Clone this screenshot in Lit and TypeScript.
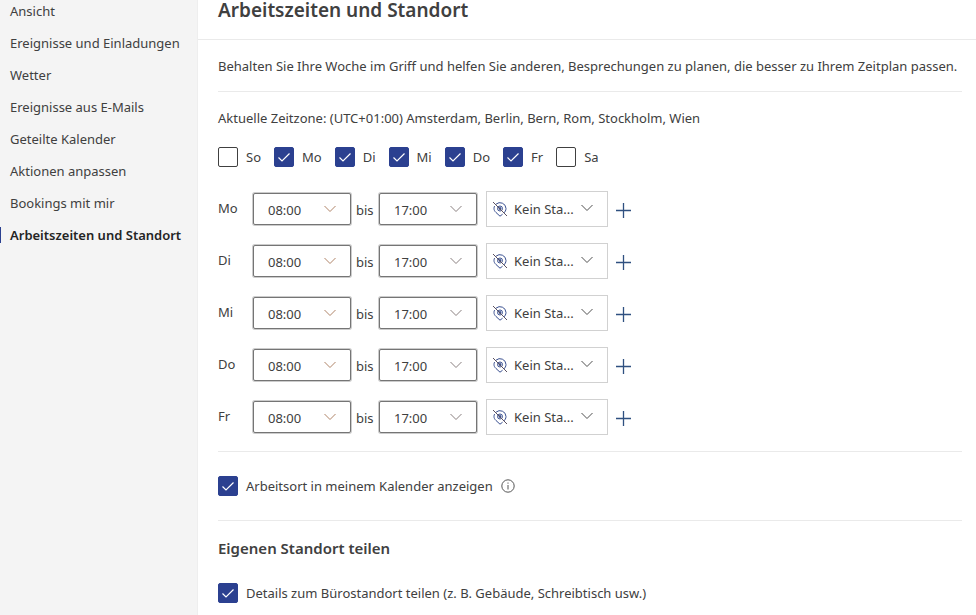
import { LitElement, css, html, svg } from "lit";
import { customElement, state } from "lit/decorators.js";

const NAV = [
  "Ansicht",
  "Ereignisse und Einladungen",
  "Wetter",
  "Ereignisse aus E-Mails",
  "Geteilte Kalender",
  "Aktionen anpassen",
  "Bookings mit mir",
  "Arbeitszeiten und Standort",
];
const DAYS = ["So", "Mo", "Di", "Mi", "Do", "Fr", "Sa"];

const chevron = html`<svg class="chevron" viewBox="0 0 14 8" aria-hidden="true">
  ${svg`<path d="M1.5 1l5.5 5.5L12.5 1" fill="none" stroke="currentColor"/>`}
</svg>`;

@customElement("app-root")
export class AppRoot extends LitElement {
  @state() private workDays = ["Mo", "Di", "Mi", "Do", "Fr"];

  static styles = css`
    :host {
      display: flex;
      min-height: 100vh;
      box-sizing: border-box;
      background: #fff;
      color: #404040;
      font: 13px/20px "Noto Sans", "Open Sans", sans-serif;
    }
    * { box-sizing: border-box; }
    nav {
      flex: 0 0 198px;
      background: #f4f4f4;
      border-right: 1px solid #eee;
    }
    ul {
      display: flex;
      flex-direction: column;
      gap: 12px;
      margin: 0;
      padding: 1px 0 0;
      list-style: none;
    }
    .link {
      display: flex;
      padding-left: 10px;
      color: inherit;
      text-decoration: none;
      white-space: nowrap;
    }
    .link.active {
      padding-left: 0;
      color: #242424;
      font-weight: 600;
    }
    .link.active::before {
      content: "";
      width: 1px;
      height: 16px;
      margin: 2px 9px 2px 0;
      background: #2b4090;
    }
    main { flex: 1; min-width: 0; }
    header {
      height: 40px;
      padding-left: 20px;
      border-bottom: 1px solid #eaeaea;
    }
    h1 {
      margin: 0;
      font-size: 19px;
      line-height: 20px;
      font-weight: 600;
    }
    .body { padding: 0 14px 0 20px; }
    p { margin: 0; white-space: nowrap; }
    .intro { padding: 16px 0 15px; border-bottom: 1px solid #eaeaea; }
    .zone { padding: 16px 0 19px; }
    .days { display: flex; gap: 13px; }
    .check {
      display: flex;
      align-items: center;
      gap: 8px;
    }
    .box {
      appearance: none;
      display: grid;
      place-items: center;
      flex: none;
      width: 20px;
      height: 20px;
      margin: 0;
      border: 1px solid #404040;
      border-radius: 2px;
      background: #fff;
    }
    .box:checked { background: #2b4090; border-color: #2b4090; }
    .tick { display: grid; }
    .tick > * { grid-area: 1 / 1; }
    .mark {
      width: 20px;
      height: 20px;
      color: #fff;
      pointer-events: none;
    }
    .box:not(:checked) + .mark { visibility: hidden; }
    .rows {
      display: grid;
      gap: 16px;
      padding: 24px 0 16px;
      border-bottom: 1px solid #eaeaea;
    }
    .row { display: flex; align-items: center; }
    .day { width: 35px; padding-bottom: 2px; }
    .until { width: 28px; padding: 2px 0 0 5px; }
    .pick { display: grid; align-items: center; }
    .pick > * { grid-area: 1 / 1; }
    select {
      appearance: none;
      margin: 0;
      color: inherit;
      font: inherit;
      background: #fff;
    }
    .time select {
      width: 98px;
      height: 32px;
      padding: 2px 0 0 14px;
      border: 1px solid #757575;
      border-radius: 2px;
      box-shadow: 0 0 0 1px #ccc;
    }
    .place { margin-left: 9px; }
    .place select {
      width: 122px;
      height: 36px;
      padding: 0 0 0 27px;
      border: 1px solid #d1d1d1;
    }
    .chevron {
      width: 14px;
      height: 8px;
      justify-self: end;
      margin-right: 14px;
      color: #8a8080;
      pointer-events: none;
    }
    .start .chevron { color: #b08468; }
    .place .chevron { margin: 0 14px 2px 0; color: #505050; }
    .pin {
      width: 16px;
      height: 16px;
      margin-left: 6px;
      color: #3a5090;
      pointer-events: none;
    }
    .add {
      display: grid;
      margin: 2px 0 0 7px;
      padding: 0;
      border: 0;
      background: none;
      color: #2f5080;
    }
    .add svg { width: 17px; height: 17px; }
    .share {
      display: flex;
      align-items: center;
      gap: 8px;
      padding: 24px 0;
      border-bottom: 1px solid #eaeaea;
    }
    .info { width: 14px; height: 14px; color: #555; }
    h2 {
      margin: 0;
      padding: 17px 0 25px;
      font-size: 15px;
      line-height: 20px;
      font-weight: 600;
    }
  `;

  private toggle(day: string) {
    this.workDays = this.workDays.includes(day)
      ? this.workDays.filter((d) => d !== day)
      : DAYS.filter((d) => d === day || this.workDays.includes(d));
  }

  private check(label: string, checked: boolean, change?: () => void) {
    return html`<label class="check">
      <span class="tick">
        <input class="box" type="checkbox" .checked=${checked} @change=${change} />
        <svg class="mark" viewBox="0 0 20 20" aria-hidden="true">
          <path d="M4.5 10.5l3.5 3.5L15.5 6.5" fill="none" stroke="currentColor" stroke-width="1.2" />
        </svg>
      </span>
      <span>${label}</span>
    </label>`;
  }

  private time(value: string, label: string, kind: "start" | "end") {
    return html`<span class=${`pick time ${kind}`}>
      <select aria-label=${label}><option>${value}</option></select>
      ${chevron}
    </span>`;
  }

  private row(day: string) {
    return html`<div class="row">
      <span class="day">${day}</span>
      ${this.time("08:00", `${day} Beginn`, "start")}
      <span class="until">bis</span>
      ${this.time("17:00", `${day} Ende`, "end")}
      <span class="pick place">
        <select aria-label=${`${day} Standort`}><option>Kein Sta...</option></select>
        <svg class="pin" viewBox="0 0 16 16" fill="none" stroke="currentColor" aria-hidden="true">
          <path d="M4 3.2A6 6 0 0 1 14 7.5c0 2-1 3.300-2.200 4.500M10.600 13.200L8 15.200 4 11.500C2.500 10 2 9 2 7.500c0-1 .2-1.700.6-2.400" />
          <circle cx="8" cy="7.500" r="2.500" />
          <circle cx="8" cy="7.500" r="1" fill="currentColor" />
          <path d="M1 1l14 14" stroke="#5a5060" />
        </svg>
        ${chevron}
      </span>
      <button class="add" type="button" aria-label=${`${day} hinzufügen`}>
        <svg viewBox="0 0 17 17" aria-hidden="true">
          <path d="M8.500 1v15M1 8.500h15" stroke="currentColor" stroke-width="1.3" />
        </svg>
      </button>
    </div>`;
  }

  render() {
    return html`
      <nav aria-label="Kalender">
        <ul>
          ${NAV.map((item, i) => {
            const active = i === NAV.length - 1;
            return html`<li><a href="#" class=${active ? "link active" : "link"}>${item}</a></li>`;
          })}
        </ul>
      </nav>
      <main>
        <header><h1>Arbeitszeiten und Standort</h1></header>
        <div class="body">
          <p class="intro">
            Behalten Sie Ihre Woche im Griff und helfen Sie anderen, Besprechungen zu planen, die besser zu Ihrem Zeitplan passen.
          </p>
          <p class="zone">Aktuelle Zeitzone: (UTC+01:00) Amsterdam, Berlin, Bern, Rom, Stockholm, Wien</p>
          <div class="days">
            ${DAYS.map((d) => this.check(d, this.workDays.includes(d), () => this.toggle(d)))}
          </div>
          <div class="rows">${this.workDays.map((d) => this.row(d))}</div>
          <div class="share">
            ${this.check("Arbeitsort in meinem Kalender anzeigen", true)}
            <svg class="info" viewBox="0 0 14 14" aria-hidden="true">
              <circle cx="7" cy="7" r="6.200" fill="none" stroke="currentColor" />
              <path d="M7 6v4.500M7 3.500v1.200" stroke="currentColor" />
            </svg>
          </div>
          <h2>Eigenen Standort teilen</h2>
          ${this.check("Details zum Bürostandort teilen (z. B. Gebäude, Schreibtisch usw.)", true)}
        </div>
      </main>
    `;
  }
}
